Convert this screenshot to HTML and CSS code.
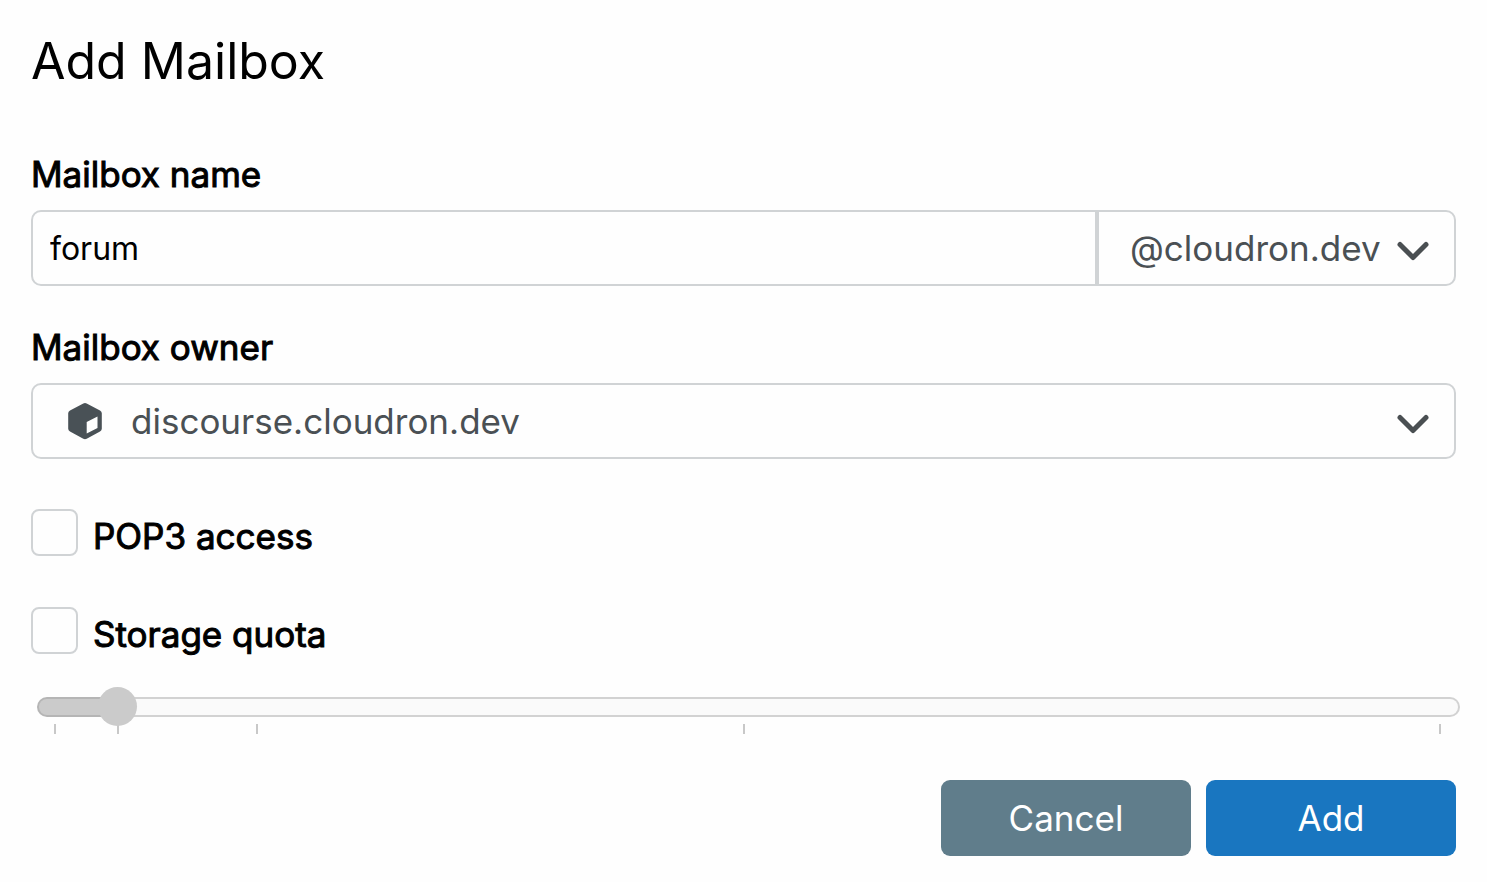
FILE: index.html
```html
<!DOCTYPE html>
<html lang="en">
<head>
<meta charset="utf-8">
<meta name="viewport" content="width=device-width, initial-scale=1">
<title>Add Mailbox</title>
<link rel="stylesheet" href="styles.css">
</head>
<body>
<main class="dialog">
  <h1 class="title">Add Mailbox</h1>
  <form class="form">
    <div class="field">
      <label class="label" for="mailbox-name">Mailbox name</label>
      <div class="input-group">
        <input class="control text-input" id="mailbox-name" type="text" value="forum">
        <div class="picker picker-domain">
          <select class="control select" aria-label="Domain">
            <option>@cloudron.dev</option>
          </select>
          <svg class="chevron" viewBox="0 0 32 20" aria-hidden="true"><path d="M3 3.500 16 16.500 29 3.500"/></svg>
        </div>
      </div>
    </div>
    <div class="field">
      <label class="label" for="mailbox-owner">Mailbox owner</label>
      <div class="picker picker-owner">
        <select class="control select" id="mailbox-owner">
          <option>discourse.cloudron.dev</option>
        </select>
        <svg class="cube" viewBox="0 0 34 38" aria-hidden="true"><path fill-rule="evenodd" d="M15.300 1.400Q17 .5 18.700 1.400L32 8.600Q33.800 9.600 33.800 11.300V26.700Q33.800 28.400 32 29.400L18.700 36.800Q17 37.700 15.300 36.800L2 29.400Q.2 28.400 .2 26.700V11.300Q.2 9.600 2 8.600ZM18.700 20V31.500L29.500 26V14.500Z"/></svg>
        <svg class="chevron" viewBox="0 0 32 20" aria-hidden="true"><path d="M3 3.500 16 16.500 29 3.500"/></svg>
      </div>
    </div>
    <div class="check-row">
      <input class="checkbox" type="checkbox" id="pop3">
      <label class="label" for="pop3">POP3 access</label>
    </div>
    <div class="check-row">
      <input class="checkbox" type="checkbox" id="quota">
      <label class="label" for="quota">Storage quota</label>
    </div>
    <div class="slider">
      <input class="range" type="range" min="0" max="1000" value="43" aria-label="Storage quota size">
      <div class="ticks" aria-hidden="true"><span></span><span></span><span></span><span></span></div>
    </div>
    <div class="actions">
      <button class="button button-cancel" type="button">Cancel</button>
      <button class="button button-add" type="submit">Add</button>
    </div>
  </form>
</main>
</body>
</html>
```
FILE: styles.css
```css
* { box-sizing: border-box; }

body {
  margin: 0;
  background: #fefefe;
  color: #000;
  font-family: Inter, sans-serif;
  font-size: 35px;
  line-height: 44px;
}

.dialog { padding: 31px 31px 26px; }

.title {
  margin: 0 0 61px;
  font-size: 50px;
  font-weight: 400;
  line-height: 60px;
}

.field {
  display: flex;
  flex-direction: column;
  gap: 14px;
  margin-bottom: 39px;
}

.label { -webkit-text-stroke: 1px #000; }

.control {
  width: 100%;
  min-width: 0;
  height: 76px;
  margin: 0;
  border: 2px solid #d0d3d5;
  border-radius: 10px;
  background: #fefefe;
  color: #000;
  font-family: inherit;
  font-size: 32px;
}

.input-group { display: flex; }

.text-input {
  flex: 1;
  padding: 0 17px;
  border-radius: 10px 0 0 10px;
}

.picker { display: grid; align-items: center; }
.picker > * { grid-area: 1 / 1; }
.picker-domain { width: 359px; }
.picker-domain .select {
  padding: 0 70px 0 31px;
  border-radius: 0 10px 10px 0;
}
.picker-owner .select { padding: 0 70px 0 98px; }

.select {
  appearance: none;
  color: #4a5054;
  font-size: 35px;
}

.chevron {
  justify-self: end;
  width: 32px;
  height: 20px;
  margin-right: 27px;
  margin-top: 5px;
  fill: none;
  stroke: #4a4f52;
  stroke-width: 5;
  stroke-linecap: round;
  stroke-linejoin: round;
  pointer-events: none;
}

.cube {
  width: 34px;
  height: 38px;
  margin-left: 37px;
  fill: #495156;
  pointer-events: none;
}

.check-row {
  display: flex;
  align-items: flex-end;
  gap: 15px;
  height: 49px;
  margin-bottom: 49px;
}
.field + .check-row { margin-top: 50px; }

.checkbox {
  appearance: none;
  align-self: flex-start;
  width: 47px;
  height: 47px;
  margin: 0;
  border: 2px solid #d0d3d5;
  border-radius: 8px;
  background: #fefefe;
}
.checkbox:checked { background: #1976c0; }

.slider { margin: -18px -4px 46px 6px; }

.range {
  appearance: none;
  display: block;
  position: relative;
  z-index: 1;
  width: 100%;
  height: 40px;
  margin: 0;
  background: none;
}
.range::-webkit-slider-runnable-track {
  height: 20px;
  border: 2px solid transparent;
  border-radius: 10px;
  background:
    linear-gradient(to right, #cbcbcb 6%, #fafafa 6%) padding-box,
    linear-gradient(to right, #b5b5b5 6%, #d2d2d2 6%) border-box;
}
.range::-webkit-slider-thumb {
  appearance: none;
  width: 39px;
  height: 39px;
  margin-top: -12px;
  border-radius: 50%;
  background: #cbcbcb;
}

.ticks {
  display: grid;
  grid-template-columns: 63fr 139fr 487fr 697fr;
  height: 10px;
  margin: -3px 19px 0 17px;
}
.ticks span { border-left: 2px solid #c8c8c8; }
.ticks span:last-child { border-right: 2px solid #c8c8c8; }

.actions {
  display: flex;
  justify-content: flex-end;
  gap: 15px;
}

.button {
  width: 250px;
  height: 76px;
  border: 0;
  border-radius: 9px;
  color: #fff;
  font-family: inherit;
  font-size: 35px;
}
.button-cancel { background: #607d8b; }
.button-add { background: #1976c0; }
```
